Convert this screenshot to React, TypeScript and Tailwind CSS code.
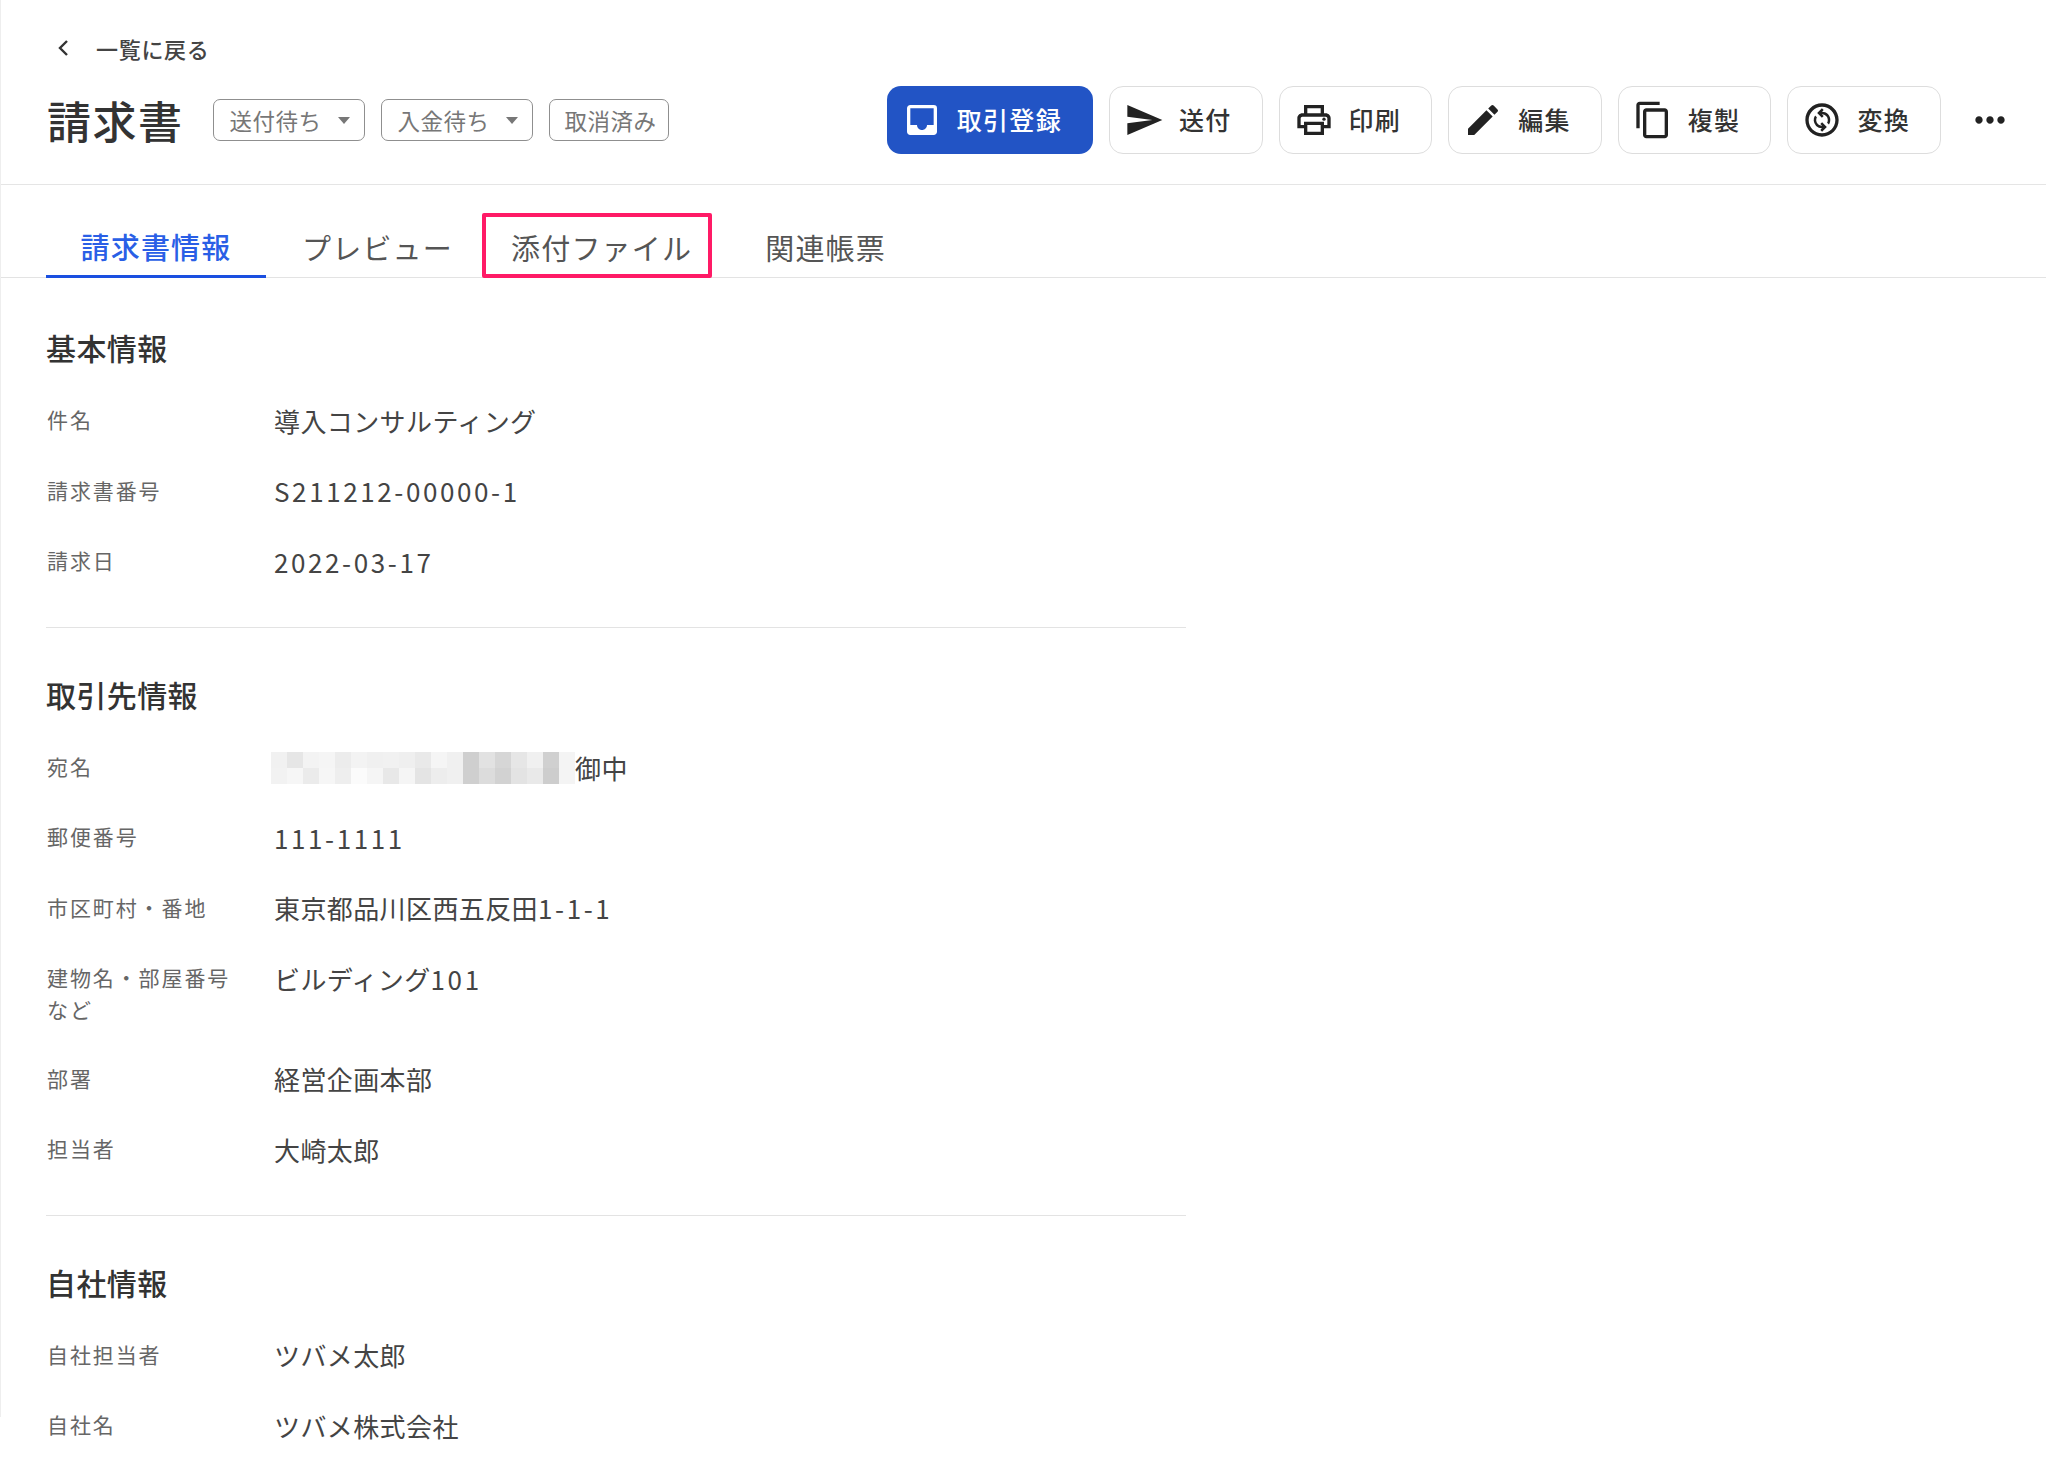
import React from "react";
import { MdInbox, MdSend, MdOutlinePrint, MdEdit, MdContentCopy, MdOutlineChangeCircle, MdMoreHoriz } from "react-icons/md";

const mosaicTop = ["#f1f1f1","#e6e6e6","#f3f3f3","#f5f5f5","#ececec","#f3f3f3","#f0f0f0","#f1f1f1","#efefef","#e9e9e9","#f5f5f5","#f0f0f0","#cfcfcf","#e2e2e2","#d6d6d6","#e6e6e6","#f0f0f0","#d0d0d0","#f4f4f4"];
const mosaicBottom = ["#f2f2f2","#f6f6f6","#ebebeb","#f6f6f6","#eeeeee","#fbfbfb","#f5f5f5","#e8e8e8","#f5f5f5","#e4e4e4","#ededed","#f0f0f0","#cfcfcf","#dcdcdc","#d2d2d2","#e3e3e3","#e9e9e9","#cdcdcd","#f4f4f4"];

function Row({ label, children }: { label: React.ReactNode; children: React.ReactNode }) {
  return (
    <div className="grid grid-cols-[228px_1fr] py-[18.25px]">
      <div className="text-[21px] leading-[32px] tracking-[1.9px] text-[#666666] pl-[1px]">{label}</div>
      <div className="flex items-center h-[34px] pt-[1px] text-[26px] leading-[34px] tracking-[0.4px] text-[#444444]">{children}</div>
    </div>
  );
}

function Num({ children }: { children: React.ReactNode }) {
  return <span className="tracking-[2.6px]">{children}</span>;
}

function Section({ title, children, last }: { title: string; children: React.ReactNode; last?: boolean }) {
  return (
    <section className={last ? "pt-[46px]" : "pt-[46px] pb-[30px] border-b border-[#e3e3e3]"}>
      <h2 className="text-[30px] leading-[40px] tracking-[0.4px] font-medium text-[#333333] mb-[18px]">{title}</h2>
      {children}
    </section>
  );
}

function ActionButton({ icon, label, primary }: { icon: React.ReactNode; label: string; primary?: boolean }) {
  return (
    <button
      className={
        primary
          ? "flex items-center gap-[15px] h-[68px] pl-[15px] pr-[31px] rounded-[14px] bg-[#2254c5] text-white text-[25px] tracking-[1.3px] font-medium"
          : "flex items-center gap-[15px] h-[68px] pl-[14px] pr-[30px] rounded-[14px] bg-white border border-[#dddddd] text-[#333333] text-[25px] tracking-[1.3px] font-medium"
      }
    >
      <span className="w-[40px] h-[40px] flex items-center justify-center">{icon}</span>
      {label}
    </button>
  );
}

function Tag({ label, caret }: { label: string; caret?: boolean }) {
  return (
    <div
      className={
        caret
          ? "flex items-center h-[42px] pl-[16px] pr-[14px] rounded-[7px] border-[1.5px] border-[#8f8f8f] text-[22.5px] tracking-[0.5px] text-[#777777] gap-[16px]"
          : "flex items-center h-[42px] pl-[15px] pr-[11px] rounded-[7px] border-[1.5px] border-[#8f8f8f] text-[22.5px] tracking-[0.5px] text-[#777777]"
      }
    >
      <span className="relative top-[1px]">{label}</span>
      {caret && (
        <svg width="12" height="7" viewBox="0 0 12 7" className="shrink-0">
          <path d="M0 0h12L6 7z" fill="#777777" />
        </svg>
      )}
    </div>
  );
}

export default function App() {
  return (
    <div className="relative w-[2046px] h-[1462px] overflow-hidden bg-white font-['Noto_Sans_CJK_JP','Noto_Sans',sans-serif]">
      <div className="absolute left-0 top-0 w-px h-[1417px] bg-[#eeeeee]" />
      <header className="h-[185px] border-b border-[#e5e5e5] pt-[32px] pl-[47px] pr-[34px]">
        <div className="flex items-center h-[32px] text-[22px] tracking-[0.7px] font-medium text-[#444444]">
          <svg width="16" height="20" viewBox="0 0 16 20" fill="none" className="ml-[8px] mr-[25px]">
            <path d="M12 3l-7 7 7 7" stroke="#333333" strokeWidth="2.4" />
          </svg>
          一覧に戻る
        </div>
        <div className="flex items-center h-[68px] mt-[22px]">
          <h1 className="text-[44px] tracking-[1.5px] font-medium text-[#333333] mr-[29px]">請求書</h1>
          <div className="flex items-center gap-[16px]">
            <Tag label="送付待ち" caret />
            <Tag label="入金待ち" caret />
            <Tag label="取消済み" />
          </div>
          <div className="ml-auto flex items-center gap-[16px]">
            <ActionButton primary icon={<MdInbox size={40} color="#ffffff" />} label="取引登録" />
            <ActionButton icon={<MdSend size={40} color="#222222" />} label="送付" />
            <ActionButton icon={<MdOutlinePrint size={40} color="#222222" />} label="印刷" />
            <ActionButton icon={<MdEdit size={40} color="#222222" />} label="編集" />
            <ActionButton icon={<MdContentCopy size={40} color="#222222" />} label="複製" />
            <ActionButton icon={<MdOutlineChangeCircle size={40} color="#222222" />} label="変換" />
            <span className="ml-[11px] w-[44px] flex justify-center"><MdMoreHoriz size={44} color="#222222" /></span>
          </div>
        </div>
      </header>

      <nav className="flex items-end h-[93px] border-b border-[#e3e3e3] pl-[46px] text-[29px] tracking-[1.2px] text-[#555555]">
        <div className="h-[64px] w-[220px] flex items-center justify-center pt-[5px] border-b-[3px] border-[#1a4fe0] text-[#2a5fe6] font-medium mb-[-1px]">請求書情報</div>
        <div className="h-[64px] flex items-center pt-[5px] ml-[36px]">プレビュー</div>
        <div className="relative h-[64px] flex items-center pt-[5px] ml-[58px]">
          添付ファイル
          <div className="absolute left-[-29px] right-[-20px] top-0 bottom-[-1px] border-4 border-[#ff1a66] rounded-[2px]" />
        </div>
        <div className="h-[64px] flex items-center pt-[5px] ml-[73px]">関連帳票</div>
      </nav>

      <main className="w-[1186px] pl-[46px] pt-[3px]">
        <Section title="基本情報">
          <Row label="件名">導入コンサルティング</Row>
          <Row label="請求書番号"><Num>S211212-00000-1</Num></Row>
          <Row label="請求日"><Num>2022-03-17</Num></Row>
        </Section>
        <Section title="取引先情報">
          <Row label="宛名">
            <div className="grid grid-cols-[repeat(19,16px)] grid-rows-[16px_16px] ml-[-3px] mt-[2px]">
              {[...mosaicTop, ...mosaicBottom].map((c, i) => (
                <span key={i} style={{ backgroundColor: c }} />
              ))}
            </div>
            <span className="mt-[2px]">御中</span>
          </Row>
          <Row label="郵便番号"><Num>111-1111</Num></Row>
          <Row label="市区町村・番地">東京都品川区西五反田<Num>1-1-1</Num></Row>
          <Row label={<>建物名・部屋番号<br />など</>}>ビルディング<Num>101</Num></Row>
          <Row label="部署">経営企画本部</Row>
          <Row label="担当者">大崎太郎</Row>
        </Section>
        <Section title="自社情報" last>
          <Row label="自社担当者">ツバメ太郎</Row>
          <Row label="自社名">ツバメ株式会社</Row>
        </Section>
      </main>
    </div>
  );
}
